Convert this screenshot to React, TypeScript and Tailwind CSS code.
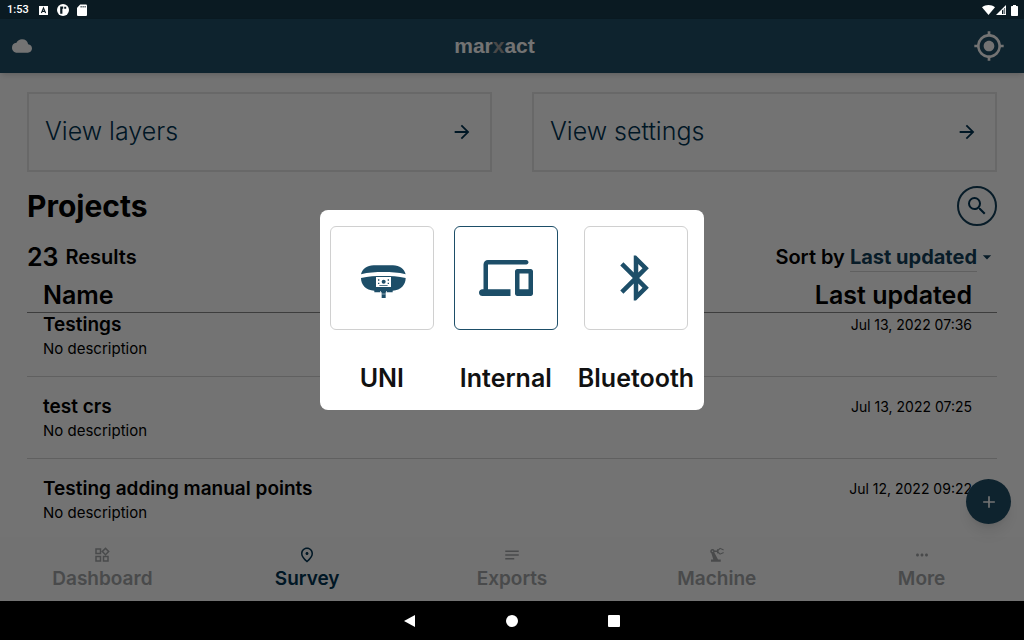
import { useState } from "react";
import type { IconType } from "react-icons";
import {
  MdAdd,
  MdArrowDropDown,
  MdArrowForward,
  MdBluetooth,
  MdCloud,
  MdMoreHoriz,
  MdMyLocation,
  MdNotes,
  MdOutlinePlace,
  MdOutlineWidgets,
  MdPrecisionManufacturing,
  MdSearch,
} from "react-icons/md";

interface Project {
  name: string;
  description: string;
  updated: string;
}

const PROJECTS: Project[] = [
  { name: "Testings", description: "No description", updated: "Jul 13, 2022 07:36" },
  { name: "test crs", description: "No description", updated: "Jul 13, 2022 07:25" },
  { name: "Testing adding manual points", description: "No description", updated: "Jul 12, 2022 09:22" },
];

const TABS: [string, IconType][] = [
  ["Dashboard", MdOutlineWidgets],
  ["Survey", MdOutlinePlace],
  ["Exports", MdNotes],
  ["Machine", MdPrecisionManufacturing],
  ["More", MdMoreHoriz],
];

function UniIcon() {
  return (
    <svg viewBox="0 0 162 162" className="size-[54px]" fill="currentColor" aria-hidden="true">
      <path d="M18 70C22 54 36 43 56 43h58c20 0 34 11 38 27C130 64 108 63 85 63S40 64 18 70z" />
      <path d="M18 81c22-5 44-6 67-6s45 1 67 6c0 20-14 37-39 38v5h-21v17H80v-17H58v-5C32 118 18 101 18 81z" />
      <path fill="#fff" d="M63 78h45v30H63z" />
      <circle cx="86" cy="92" r="6" />
      <path d="M69 85h4v4h-4zM69 95h4v4h-4zM98 85h4v4h-4zM98 95h4v4h-4zM73 102h25v2H73z" />
      <path fill="#fff" d="M76 120h2v5h-2zM93 120h2v5h-2zM80 128h12v2H80z" />
    </svg>
  );
}

function DevicesIcon() {
  return (
    <svg viewBox="0 0 24 24" className="size-[54px]" fill="currentColor" aria-hidden="true">
      <path d="M4 6h17c.55 0 1-.45 1-1s-.45-1-1-1H4c-1.1 0-2 .9-2 2v11h-.5c-.83 0-1.5.67-1.5 1.5S.67 20 1.5 20H14v-3H4V6zm19 2h-6c-.55 0-1 .45-1 1v10c0 .55.45 1 1 1h6c.55 0 1-.45 1-1V9c0-.55-.45-1-1-1zm-1 9h-4v-7h4v7z" />
    </svg>
  );
}

const SOURCES = [
  { label: "UNI", icon: <UniIcon /> },
  { label: "Internal", icon: <DevicesIcon /> },
  { label: "Bluetooth", icon: <MdBluetooth className="size-[54px]" /> },
];

function StatusBar() {
  return (
    <div className="flex h-[19px] shrink-0 items-center justify-between bg-[#0a1a22] pt-px pr-[6px] pl-[7px] text-white">
      <div className="flex items-center">
        <span className="font-[Roboto,sans-serif] text-[11px] leading-4 font-medium">1:53</span>
        <svg viewBox="0 0 9 9" className="ml-[10px] size-[9px]" aria-hidden="true">
          <path fill="#fff" d="M0 0h9v9H0z" />
          <path fill="none" stroke="#0a1a22" strokeWidth="1.1" d="M2.4 7 4.5 2l2.1 5M3.2 5.4h2.6" />
        </svg>
        <svg viewBox="0 0 12 12" className="ml-[9px] size-3" aria-hidden="true">
          <circle cx="6" cy="6" r="6" fill="#fff" />
          <path fill="#0a1a22" d="M3.2 2.6h3v2.2H5.4v5H3.2zM7.2 2.8h2v2h-2z" />
        </svg>
        <svg viewBox="0 0 10 12" className="ml-2 h-3 w-[10px]" aria-hidden="true">
          <path fill="#fff" d="M3.2.5H9q1 0 1 1V11q0 1-1 1H1q-1 0-1-1V3.8z" />
          <path fill="#0a1a22" d="M3.6 2h1v1.6h-1zM5.6 2h1v1.6h-1zM7.6 2h1v1.6h-1z" />
        </svg>
      </div>
      <div className="flex items-center">
        <svg viewBox="0 0 13 10" className="h-[10px] w-[13px]" fill="#fff" aria-hidden="true">
          <path d="M6.5 10 0 2.2C3.6-.6 9.4-.6 13 2.2z" />
        </svg>
        <svg viewBox="0 0 10 10" className="ml-px size-[10px]" aria-hidden="true">
          <path fill="#fff" d="M10 0v10H0z" />
          <path fill="#0a1a22" d="M7.4 4.3V9H6V5.6zM8.4 3h.7v6h-.7z" />
        </svg>
        <svg viewBox="0 0 7 11" className="ml-[5px] h-[11px] w-[7px]" fill="#fff" aria-hidden="true">
          <path d="M2 0h3v1h1.3q.7 0 .7.7v8.6q0 .7-.7.7H.7q-.7 0-.7-.7V1.7Q0 1 .7 1H2z" />
        </svg>
      </div>
    </div>
  );
}

function LinkCard({ label }: { label: string }) {
  return (
    <a href="#" className="flex h-20 items-center justify-between border-2 border-[#e6e6e6] pr-[17px] pl-4 text-[#003352]">
      <span className="text-[25px] font-light">{label}</span>
      <MdArrowForward className="size-[22px]" />
    </a>
  );
}

function ProjectTable() {
  return (
    <table className="w-full border-separate border-spacing-0 text-left">
      <thead>
        <tr className="h-[35px] text-[25px] leading-[34px]">
          <th className="border-b border-[#888] p-0 pl-4 font-semibold">Name</th>
          <th className="border-b border-[#888] p-0 pr-[25px] text-right font-semibold">Last updated</th>
        </tr>
      </thead>
      <tbody>
        {PROJECTS.map((p, i) => (
          <tr key={p.name} className="align-top">
            <td className={`border-b border-[#d4d4d4] pb-[15px] pl-4 ${i === 0 ? "pt-0" : "pt-[18px]"}`}>
              <p className="text-[19px] leading-6 font-semibold">{p.name}</p>
              <p className="text-[15px] leading-6">{p.description}</p>
            </td>
            <td className={`border-b border-[#d4d4d4] pb-[15px] pr-[25px] text-right text-sm leading-6 ${i === 0 ? "pt-0" : "pt-[18px]"}`}>
              {p.updated}
            </td>
          </tr>
        ))}
      </tbody>
    </table>
  );
}

export default function App() {
  const [source, setSource] = useState("Internal");
  const [tab, setTab] = useState("Survey");

  return (
    <div className="flex h-screen flex-col overflow-hidden bg-black font-[Inter,sans-serif] text-black">
      <StatusBar />

      <div className="relative flex min-h-0 flex-1 flex-col bg-white">
        <header className="z-10 grid h-[54px] shrink-0 grid-cols-3 items-center bg-[#214e66] pr-[19px] pl-3 text-white shadow-md">
          <MdCloud className="size-5" />
          <span className="mr-7 text-center font-['Liberation_Sans',sans-serif] text-[21px] font-bold">
            mar<span className="text-[#a0a0a0]">x</span>act
          </span>
          <button aria-label="My location" className="justify-self-end">
            <MdMyLocation className="size-8" />
          </button>
        </header>

        <main className="relative flex min-h-0 flex-1 flex-col px-[27px] pt-[19px] pb-[11px]">
          <div className="grid grid-cols-2 gap-10">
            <LinkCard label="View layers" />
            <LinkCard label="View settings" />
          </div>

          <div className="mt-[14px] flex h-10 items-center justify-between">
            <h1 className="text-[30px] font-bold">Projects</h1>
            <button aria-label="Search" className="grid size-10 place-items-center rounded-full border-2 border-[#123f5a] text-[#003352]">
              <MdSearch className="size-6" />
            </button>
          </div>

          <div className="mt-4 flex h-[30px] items-center justify-between">
            <p className="flex items-center gap-[7px] font-semibold">
              <span className="text-[25px] leading-[30px]">23</span>
              <span className="text-xl leading-[30px]">Results</span>
            </p>
            <div className="flex items-center text-xl">
              <label htmlFor="sort" className="mr-[5px] font-semibold">Sort by</label>
              <select id="sort" className="field-sizing-content appearance-none border-b border-[#d4d4d4] font-bold text-[#123f5a]">
                <option>Last updated</option>
              </select>
              <MdArrowDropDown className="size-5 text-[#123f5a]" />
            </div>
          </div>

          <div className="mt-[6px] min-h-0 flex-1 overflow-hidden">
            <ProjectTable />
          </div>

          <button aria-label="Add project" className="absolute right-[13px] bottom-[13px] grid size-[45px] place-items-center rounded-full bg-[#214e66] text-white shadow-lg">
            <MdAdd className="size-5" />
          </button>
        </main>

        <nav className="grid h-16 shrink-0 grid-cols-5 bg-[#fcfcfc]">
          {TABS.map(([label, Icon]) => (
            <button
              key={label}
              onClick={() => setTab(label)}
              className={`flex flex-col items-center pt-[9px] text-[19px] leading-[30px] font-semibold ${tab === label ? "text-[#003352]" : "text-[#a2a5a7]"}`}
            >
              <Icon className="size-[18px]" />
              {label}
            </button>
          ))}
        </nav>

        {/* backdrop and position source picker */}
        <div className="absolute inset-0 z-20 flex items-center justify-center bg-black/55">
          <div role="dialog" aria-label="Position source" className="flex h-[200px] gap-5 rounded-lg bg-white px-[10px] pt-4 text-[#111]">
            {SOURCES.map((s) => (
              <button key={s.label} onClick={() => setSource(s.label)} className="flex min-w-[104px] flex-col items-center">
                <span
                  className={`grid size-[104px] place-items-center rounded-md border text-[#1d4e68] ${source === s.label ? "border-[#1d4e68]" : "border-[#d0d0d0]"}`}
                >
                  {s.icon}
                </span>
                <span className="mt-8 text-[25px] leading-8 font-semibold">{s.label}</span>
              </button>
            ))}
          </div>
        </div>
      </div>

      <div className="flex h-[39px] shrink-0 items-center justify-center gap-[90px] bg-black text-white">
        <button aria-label="Back">
          <svg viewBox="0 0 12 12" className="size-3" fill="currentColor"><path d="M11 0v12L0 6z" /></svg>
        </button>
        <button aria-label="Home" className="size-3 rounded-full bg-white" />
        <button aria-label="Recents" className="size-3 rounded-[1px] bg-white" />
      </div>
    </div>
  );
}
